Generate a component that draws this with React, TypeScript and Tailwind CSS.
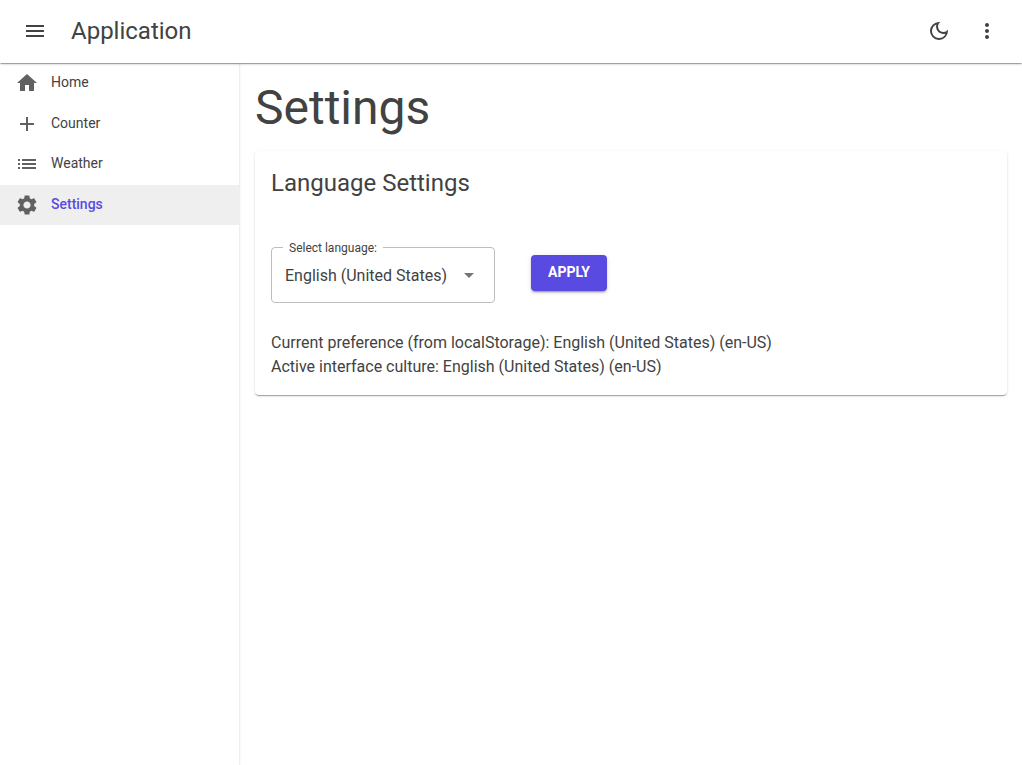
import type { ReactNode } from "react";
import { useState } from "react";
import {
  MdAdd,
  MdArrowDropDown,
  MdHome,
  MdList,
  MdMenu,
  MdMoreVert,
  MdOutlineDarkMode,
  MdSettings,
} from "react-icons/md";

function IconButton({ label, children }: { label: string; children: ReactNode }) {
  return (
    <button
      type="button"
      aria-label={label}
      className="flex size-12 cursor-pointer items-center justify-center rounded-full text-2xl hover:bg-black/5"
    >
      {children}
    </button>
  );
}

const links = [
  { name: "Home", href: "#home", icon: <MdHome /> },
  { name: "Counter", href: "#counter", icon: <MdAdd /> },
  { name: "Weather", href: "#weather", icon: <MdList /> },
  { name: "Settings", href: "#settings", icon: <MdSettings />, active: true },
];

function Drawer() {
  return (
    <aside className="w-[239px] shrink-0 bg-white shadow-[0_2px_1px_-1px_rgba(0,0,0,0.2),0_1px_1px_0_rgba(0,0,0,0.14),0_1px_3px_0_rgba(0,0,0,0.12)]">
      <nav className="flex h-[162px] flex-col">
        {links.map((link) => (
          <a
            key={link.name}
            href={link.href}
            aria-current={link.active ? "page" : undefined}
            className={
              link.active
                ? "flex flex-1 items-center gap-3 bg-[#efefef] px-[15px] text-sm font-medium text-[#594ae2]"
                : "flex flex-1 items-center gap-3 px-[15px] text-sm text-[#424242]"
            }
          >
            <span className="text-2xl text-[#616161]">{link.icon}</span>
            <span className="pb-0.5">{link.name}</span>
          </a>
        ))}
      </nav>
    </aside>
  );
}

export default function App() {
  const [language, setLanguage] = useState("en-US");

  return (
    <div className="flex min-h-screen flex-col bg-white font-[Roboto,sans-serif] text-base text-[#424242]">
      <header className="z-10 flex h-[63px] items-center bg-white px-[11px] pb-px shadow-[0_2px_1px_-1px_rgba(0,0,0,0.2),0_1px_1px_0_rgba(0,0,0,0.14),0_1px_3px_0_rgba(0,0,0,0.12)]">
        <IconButton label="Toggle menu">
          <MdMenu />
        </IconButton>
        <span className="ml-3 flex-1 text-2xl">Application</span>
        <IconButton label="Toggle dark mode">
          <MdOutlineDarkMode />
        </IconButton>
        <IconButton label="More options">
          <MdMoreVert />
        </IconButton>
      </header>

      <div className="flex flex-1">
        <Drawer />
        <main className="min-w-0 flex-1 pt-4 pr-[15px] pl-4">
          <h1 className="mb-[14px] text-5xl leading-[58px]">Settings</h1>
          <section className="rounded bg-white p-4 shadow-[0_2px_1px_-1px_rgba(0,0,0,0.2),0_1px_1px_0_rgba(0,0,0,0.14),0_1px_3px_0_rgba(0,0,0,0.12)]">
            <h2 className="text-2xl">Language Settings</h2>
            <div className="mt-12 flex items-start gap-9">
              <div className="relative w-56">
                <label htmlFor="language" className="absolute -top-[7px] left-3 bg-white px-[6px] text-xs">
                  Select language:
                </label>
                <select
                  id="language"
                  value={language}
                  onChange={(event) => setLanguage(event.target.value)}
                  className="h-14 w-full appearance-none rounded border border-[#bdbdbd] bg-transparent pt-0.5 pr-10 pl-[13px] text-base"
                >
                  <option value="en-US">English (United States)</option>
                </select>
                <MdArrowDropDown className="pointer-events-none absolute top-4 right-[14px] text-2xl text-[#757575]" />
              </div>
              <button
                type="button"
                className="mt-2 h-9 min-w-[76px] cursor-pointer rounded bg-[#594ae2] px-4 pb-0.5 text-sm font-bold text-white uppercase shadow-[0_3px_1px_-2px_rgba(0,0,0,0.2),0_2px_2px_0_rgba(0,0,0,0.14),0_1px_5px_0_rgba(0,0,0,0.12)]"
              >
                Apply
              </button>
            </div>
            <p className="mt-7">Current preference (from localStorage): English (United States) (en-US)</p>
            <p>Active interface culture: English (United States) (en-US)</p>
          </section>
        </main>
      </div>
    </div>
  );
}
